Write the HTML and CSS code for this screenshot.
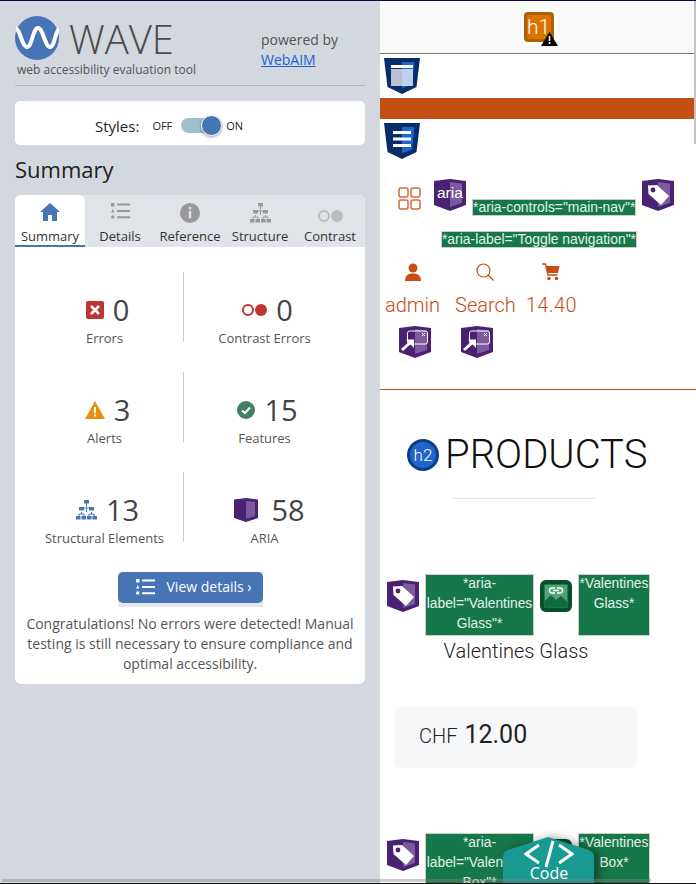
FILE: index.html
```html
<!DOCTYPE html>
<html lang="en">
<head>
  <meta charset="UTF-8">
  <meta name="viewport" content="width=device-width, initial-scale=1.0">
  <title>WAVE Summary</title>
  <link rel="stylesheet" href="styles.css">
</head>
<body>

<svg class="defs" width="0" height="0">
  <symbol id="ariaShield" viewBox="0 0 32 32">
    <path d="M0 2 16 0 32 2V26L16 32 0 26Z" fill="#4a2173"/>
    <path d="M16 3 28 4.500V24L16 28Z" fill="#7b5a9e"/>
  </symbol>
  <symbol id="tree" viewBox="0 0 21 20">
    <path d="M10.500 3V7M5.500 10V8H15.500V10M3 14V16M8 14V16M13 14V16M18 14V16M3 14H8M13 14H18M5.500 12V14M15.500 12V14M10.500 8V12" fill="none" stroke="currentColor"/>
    <path d="M8 0h5v3.500H8ZM3 7h5v3.500H3ZM13 7h5v3.500h-5ZM0 16h4.500v3.500H0ZM5.500 16h4.500v3.500H5.500ZM11 16h4.500v3.500H11ZM16.500 16h4.500v3.500h-4.500Z" fill="currentColor"/>
  </symbol>
  <symbol id="listIcon" viewBox="0 0 19 16">
    <path d="M0 0h3.500v3.500H0ZM1.750 6 3.500 9.500H0Z" fill="currentColor"/>
    <circle cx="1.750" cy="14" r="1.750" fill="currentColor"/>
    <path d="M6 1.500h13M6 8h13M6 14.200h13" stroke="currentColor" stroke-width="2"/>
  </symbol>
  <symbol id="tagShield" viewBox="0 0 32 32">
    <use href="#ariaShield"/>
    <path d="M6 6.500 15 6 27 17 19 26 6.500 15Z" fill="#fff"/>
    <circle cx="11" cy="11" r="2.400" fill="#4a2173"/>
  </symbol>
  <symbol id="dialogShield" viewBox="0 0 32 32">
    <use href="#ariaShield"/>
    <rect x="8.500" y="5" width="20" height="13" rx="2" fill="none" stroke="#fff" stroke-width="1"/>
    <path d="M23 7l3 3M26 7l-3 3" stroke="#fff"/>
    <path d="M3 24 13 15" stroke="#fff" stroke-width="3"/>
    <path d="M7 13.500h8v8.500Z" fill="#fff"/>
  </symbol>
  <symbol id="htmlShield" viewBox="0 0 36 36">
    <path d="M0 0H36L32.500 29 18 36 3.500 29Z" fill="#0a2d6a"/>
    <path d="M18 4H30.500L28 27 18 30Z" fill="#1f66c8"/>
  </symbol>
</svg>

<aside class="sidebar">
  <header class="brand">
    <div class="brand-main">
      <div class="brand-logo">
        <svg width="44" height="44" viewBox="0 0 44 44">
          <circle cx="22" cy="22" r="22" fill="#4774b5"/>
          <path d="M1 13C5 13 7 31 12 31S18 12 23 12 30 31 35 31 40 15 44 13" fill="none" stroke="#fff" stroke-width="4"/>
        </svg>
        <span class="brand-name">WAVE</span>
      </div>
      <div class="brand-tag">web accessibility evaluation tool</div>
    </div>
    <div class="powered">powered by<br><a href="#">WebAIM</a></div>
  </header>

  <div class="styles-card">
    <span class="styles-label">Styles:</span>
    <span class="styles-state">OFF</span>
    <span class="toggle"><span class="toggle-knob"></span></span>
    <span class="styles-state">ON</span>
  </div>

  <h2 class="summary-title">Summary</h2>

  <div class="panel">
    <nav class="tabs">
      <div class="tab active">
        <span class="tab-icon"><svg width="20" height="18" viewBox="0 0 20 18"><path d="M10 0 20 9H17V18H12V12H8V18H3V9H0Z" fill="#4774b5"/></svg></span>
        <span>Summary</span>
      </div>
      <div class="tab">
        <span class="tab-icon"><svg class="icon-gray" width="19" height="16"><use href="#listIcon"/></svg></span>
        <span>Details</span>
      </div>
      <div class="tab">
        <span class="tab-icon"><svg width="20" height="20" viewBox="0 0 20 20"><circle cx="10" cy="10" r="10" fill="#999"/><path d="M8.800 4h2.400v2.400H8.800ZM8.800 8h2.400v7.500H8.800Z" fill="#e0e3e8"/></svg></span>
        <span>Reference</span>
      </div>
      <div class="tab">
        <span class="tab-icon"><svg class="icon-gray" width="21" height="20"><use href="#tree"/></svg></span>
        <span>Structure</span>
      </div>
      <div class="tab">
        <span class="tab-icon tab-icon-low"><svg width="25" height="12" viewBox="0 0 25 12"><circle cx="6" cy="6" r="5" fill="none" stroke="#bbb" stroke-width="2"/><circle cx="19" cy="6" r="6" fill="#bbb"/></svg></span>
        <span>Contrast</span>
      </div>
    </nav>

    <div class="stats">
      <div class="stat">
        <div class="stat-value">
          <svg width="18" height="18" viewBox="0 0 18 18"><rect width="18" height="18" rx="2" fill="#bd3535"/><path d="M5 5l8 8M13 5l-8 8" stroke="#fff" stroke-width="2.500"/></svg>
          <span>0</span>
        </div>
        <div class="stat-label">Errors</div>
      </div>
      <div class="stat stat-right">
        <div class="stat-value">
          <svg width="25" height="12" viewBox="0 0 25 12"><circle cx="6" cy="6" r="5" fill="none" stroke="#bd3535" stroke-width="2"/><circle cx="19" cy="6" r="6" fill="#bd3535"/></svg>
          <span>0</span>
        </div>
        <div class="stat-label">Contrast Errors</div>
      </div>
      <div class="stat">
        <div class="stat-value">
          <svg width="20" height="18" viewBox="0 0 20 18"><path d="M10 0 20 18H0Z" fill="#e8910f"/><path d="M9 6h2v6H9ZM9 13.500h2v2H9Z" fill="#fff"/></svg>
          <span>3</span>
        </div>
        <div class="stat-label">Alerts</div>
      </div>
      <div class="stat stat-right">
        <div class="stat-value">
          <svg width="18" height="18" viewBox="0 0 18 18"><circle cx="9" cy="9" r="9" fill="#408164"/><path d="M5 9.500 8 12 13 6.500" fill="none" stroke="#fff" stroke-width="2"/></svg>
          <span>15</span>
        </div>
        <div class="stat-label">Features</div>
      </div>
      <div class="stat">
        <div class="stat-value">
          <svg class="icon-blue" width="21" height="20"><use href="#tree"/></svg>
          <span>13</span>
        </div>
        <div class="stat-label">Structural Elements</div>
      </div>
      <div class="stat stat-right">
        <div class="stat-value stat-value-wide">
          <svg width="24" height="24" viewBox="0 0 24 24"><path d="M0 1.500 12 0 24 1.500V20L12 24 0 20Z" fill="#4a2173"/><path d="M12 3 21 4V18L12 21Z" fill="#7b5a9e"/></svg>
          <span>58</span>
        </div>
        <div class="stat-label">ARIA</div>
      </div>
    </div>

    <div class="details-wrap">
      <a class="details-btn" href="#">
        <svg class="icon-white" width="19" height="16"><use href="#listIcon"/></svg>
        <span>View details ›</span>
      </a>
    </div>
    <p class="congrats">Congratulations! No errors were detected! Manual testing is still necessary to ensure compliance and optimal accessibility.</p>
  </div>
</aside>

<main class="page">
  <div class="topbar">
    <span class="h1-icon">
      <span class="h1-box">h1</span>
      <svg class="h1-warn" width="17" height="14" viewBox="0 0 17 14"><path d="M8.500 0 17 14H0Z" fill="#000"/><path d="M7.700 4h1.600v5H7.700ZM7.700 10h1.600v2H7.700Z" fill="#fff"/></svg>
    </span>
  </div>

  <div class="shield-row">
    <svg width="36" height="36" viewBox="0 0 36 36">
      <use href="#htmlShield"/>
      <path d="M7 11H29V28H7Z" fill="#fff" opacity=".7"/>
      <path d="M7 7H29V10H7Z" fill="#fff"/>
    </svg>
  </div>
  <div class="nav-bar"></div>
  <div class="shield-row">
    <svg width="36" height="36" viewBox="0 0 36 36">
      <use href="#htmlShield"/>
      <path d="M9 9.500H27M9 16H27M9 22.500H27" stroke="#fff" stroke-width="3"/>
    </svg>
  </div>

  <div class="tool-row">
    <svg class="grid-icon" width="23" height="23" viewBox="0 0 23 23" fill="none" stroke="#d2693a" stroke-width="1.500">
      <rect x="1" y="1" width="9" height="9" rx="2"/><rect x="13" y="1" width="9" height="9" rx="2"/>
      <rect x="1" y="13" width="9" height="9" rx="2"/><rect x="13" y="13" width="9" height="9" rx="2"/>
    </svg>
    <span class="aria-icon">
      <svg width="32" height="32"><use href="#ariaShield"/></svg>
      <span class="aria-text">aria</span>
    </span>
    <span class="attr attr-push">*aria-controls="main-nav"*</span>
    <svg width="32" height="32"><use href="#tagShield"/></svg>
  </div>
  <div class="attr-row"><span class="attr">*aria-label="Toggle navigation"*</span></div>

  <div class="links">
    <div class="link">
      <svg width="18" height="18" viewBox="0 0 18 18"><circle cx="9" cy="5" r="4.500" fill="#c44e14"/><path d="M1 18C1 12 5 10.500 9 10.500S17 12 17 18Z" fill="#c44e14"/></svg>
      <span>admin</span>
    </div>
    <div class="link">
      <svg width="18" height="18" viewBox="0 0 18 18" fill="none" stroke="#c44e14" stroke-width="1.200"><circle cx="7.500" cy="7.500" r="6.500"/><path d="M12 12l5.500 5.500"/></svg>
      <span>Search</span>
    </div>
    <div class="link link-cart">
      <svg width="18" height="18" viewBox="0 0 18 18"><path d="M0 1H3.500L6 12H15.500" fill="none" stroke="#c44e14" stroke-width="1.500"/><path d="M4 3H17.500L16 10H5.500Z" fill="#c44e14"/><circle cx="7" cy="15.500" r="1.800" fill="#c44e14"/><circle cx="14.500" cy="15.500" r="1.800" fill="#c44e14"/></svg>
      <span>14.40</span>
    </div>
  </div>
  <div class="dialog-row">
    <svg width="32" height="32"><use href="#dialogShield"/></svg>
    <svg width="32" height="32"><use href="#dialogShield"/></svg>
  </div>
  <div class="page-rule"></div>

  <div class="products-head">
    <span class="h2-icon">h2</span>
    <h2>PRODUCTS</h2>
  </div>
  <div class="products-rule"></div>

  <div class="product-row">
    <svg class="row-icon" width="32" height="32"><use href="#tagShield"/></svg>
    <span class="attr attr-box attr-wide">*aria-label="Valentines Glass"*</span>
    <svg class="row-icon" width="32" height="32" viewBox="0 0 32 32">
      <rect width="32" height="32" rx="6" fill="#064f2b"/>
      <rect x="4.500" y="4.500" width="23" height="23" fill="#4fa37a"/>
      <path d="M4.500 27.500V21L11 15 16 20 21 16 27.500 22V27.500Z" fill="#0f6a3f"/>
      <path d="M15 8H12A2.500 2.500 0 0 0 12 13H15M17 8H20A2.500 2.500 0 0 1 20 13H17M13 10.500H19" fill="none" stroke="#fff" stroke-width="1.500"/>
    </svg>
    <span class="attr attr-box attr-narrow">*Valentines Glass*</span>
  </div>
  <div class="product-name">Valentines Glass</div>
  <div class="price-card"><span class="price-cur">CHF</span><span class="price-num">12.00</span></div>

  <div class="product-row product-row-next">
    <svg class="row-icon" width="32" height="32"><use href="#tagShield"/></svg>
    <span class="attr attr-box attr-wide">*aria-label="Valentines Box"*</span>
    <svg class="row-icon" width="32" height="32" viewBox="0 0 32 32"><rect width="32" height="32" rx="6" fill="#064f2b"/></svg>
    <span class="attr attr-box attr-narrow">*Valentines Box*</span>
  </div>
</main>

<a class="code-btn" href="#">
  <svg class="code-bg" width="91" height="47" viewBox="0 0 91 47"><path d="M0 47V20Q0 15 5 13L45 0 86 13Q91 15 91 20V47Z" fill="#189a93"/></svg>
  <svg class="code-glyph" width="50" height="28" viewBox="0 0 50 28" fill="none" stroke="#fff" stroke-width="3"><path d="M15 5 2 14 15 23M35 5 48 14 35 23M29 1 22 27"/></svg>
  <span class="code-label">Code</span>
</a>
<div class="scroll-h"></div>
<div class="scroll-v"></div>

</body>
</html>
```

FILE: styles.css
```css
/* Page frame */
html, body {
  margin: 0;
  height: 884px;
  overflow: hidden;
}
body {
  display: flex;
  position: relative;
  border-top: 1px solid #0a0a3c;
  border-bottom: 1px solid #111;
  box-sizing: border-box;
  font-family: "Open Sans", sans-serif;
  background-color: #fff;
}
.defs {
  position: absolute;
}

/* WAVE sidebar */
.sidebar {
  width: 380px;
  flex: none;
  box-sizing: border-box;
  padding: 15px 15px 0;
  background-color: #d3d7de;
}
.brand {
  display: flex;
  justify-content: space-between;
  height: 69px;
  border-bottom: 1px solid #b1b4ba;
}
.brand-logo {
  display: flex;
  align-items: center;
  gap: 10px;
}
.brand-name {
  padding-top: 2px;
  font-size: 40px;
  font-weight: 300;
  color: #4a4a4a;
  line-height: 42px;
}
.brand-tag {
  font-size: 12px;
  line-height: 16px;
  color: #555;
  margin-left: 2px;
  margin-top: 2px;
}
.powered {
  width: 104px;
  font-size: 14px;
  line-height: 20px;
  color: #555;
  padding-top: 14px;
}
.powered a {
  color: #1a63d8;
}
.styles-card {
  display: flex;
  align-items: center;
  height: 44px;
  box-sizing: border-box;
  margin-top: 15px;
  padding: 5px 0 0 80px;
  background-color: #fff;
  border-radius: 5px;
  color: #222;
}
.styles-label {
  font-size: 15px;
  margin-right: 13px;
}
.styles-state {
  font-size: 11px;
}
.toggle {
  position: relative;
  width: 41px;
  height: 15px;
  margin: 0 4px 0 9px;
  background-color: #9dc0cb;
  border-radius: 8px;
}
.toggle-knob {
  position: absolute;
  top: -3px;
  right: 0;
  width: 19px;
  height: 19px;
  background-color: #4774b5;
  border: 1px solid #fff;
  border-radius: 50%;
  box-shadow: 0 1px 3px rgba(0, 0, 0, .4);
}
.summary-title {
  margin: 9px 0 11px;
  font-size: 22px;
  line-height: 30px;
  font-weight: 400;
  color: #222;
}
.panel {
  width: 350px;
  height: 489px;
  background-color: #fff;
  border-radius: 6px;
}
.tabs {
  display: flex;
  height: 52px;
  background-color: #e0e3e8;
  border-radius: 6px 6px 0 0;
}
.tab {
  width: 70px;
  height: 52px;
  box-sizing: border-box;
  display: flex;
  flex-direction: column;
  align-items: center;
  padding-top: 8px;
  font-size: 13px;
  line-height: 18px;
  color: #333;
}
.tab-icon {
  height: 24px;
}
.tab-icon-low {
  padding-top: 5px;
  height: 19px;
}
.tab.active {
  background-color: #fff;
  border-radius: 6px 6px 0 0;
  border-bottom: 2px solid #4774b5;
}
.icon-gray {
  color: #999;
}
.icon-blue {
  color: #4774b5;
}
.icon-white {
  color: #fff;
}

/* Count grid */
.stats {
  display: grid;
  grid-template-columns: 157px 162px;
  grid-auto-rows: 70px;
  row-gap: 30px;
  margin: 25px 0 30px 11px;
}
.stat {
  display: flex;
  flex-direction: column;
  align-items: center;
  padding-top: 20px;
  box-sizing: border-box;
}
.stat-right {
  border-left: 1px solid #ccc;
}
.stat-value {
  display: flex;
  align-items: center;
  gap: 9px;
  padding-left: 6px;
  font-size: 29px;
  line-height: 36px;
  color: #444;
}
.stat-value-wide {
  gap: 13px;
  padding-left: 10px;
}
.stat-label {
  font-size: 13px;
  line-height: 20px;
  color: #555;
}
.details-wrap {
  width: 145px;
  height: 35px;
  margin: 0 auto;
  background-color: #e8e9ee;
}
.details-btn {
  display: flex;
  align-items: center;
  gap: 12px;
  height: 31px;
  box-sizing: border-box;
  padding: 0 0 2px 18px;
  background-color: #4774b5;
  border-radius: 5px;
  color: #fff;
  font-size: 14px;
  text-decoration: none;
}
.congrats {
  margin: 7px 0 0;
  padding: 0 10px;
  font-size: 14px;
  line-height: 20px;
  color: #555;
  text-align: center;
}

/* Page under evaluation */
.page {
  flex: 1;
  min-width: 0;
  font-family: Roboto, sans-serif;
  font-weight: 300;
  color: #222;
}
.topbar {
  display: flex;
  justify-content: center;
  height: 52px;
  background-color: #f9f9f9;
  border-bottom: 1px solid #777;
  padding-left: 1px;
}
.h1-icon {
  position: relative;
  width: 32px;
  height: 32px;
  margin-top: 10px;
}
.h1-box {
  display: block;
  width: 24px;
  height: 24px;
  border: 4px solid #b06000;
  border-radius: 5px;
  background-color: #d97400;
  outline: 3px solid #fff;
  outline-offset: -1px;
  color: #fff;
  font-size: 21px;
  line-height: 24px;
  text-align: center;
}
.h1-warn {
  position: absolute;
  left: 18px;
  top: 21px;
}
.shield-row {
  display: flex;
  padding: 4px;
}
.nav-bar {
  height: 21px;
  background-color: #c44e14;
}
.tool-row {
  display: flex;
  align-items: flex-start;
  margin-top: 16px;
  padding-left: 18px;
}
.grid-icon {
  margin: 8px 13px 0 0;
}
.aria-icon {
  position: relative;
  width: 32px;
  height: 32px;
}
.aria-text {
  position: absolute;
  left: 3px;
  top: 5px;
  color: #fff;
  font-family: "Liberation Sans", sans-serif;
  font-size: 15.500px;
  font-weight: 400;
}
.attr {
  background-color: #16784a;
  border: 1px solid #ccc;
  color: #e4f1ea;
  font-family: "Liberation Sans", sans-serif;
  font-size: 13.900px;
  font-weight: 400;
  line-height: 15px;
}
.attr-push {
  margin: 20px 6px 0;
}
.attr-row {
  display: flex;
  justify-content: flex-end;
  margin-top: 15px;
  padding-right: 59px;
}
.links {
  display: flex;
  gap: 15px;
  margin-top: 15px;
  padding-left: 5px;
  color: #c44e14;
  font-size: 20px;
  line-height: 24px;
}
.link {
  display: flex;
  flex-direction: column;
  align-items: center;
  gap: 12px;
}
.link-cart {
  margin-left: -5px;
  letter-spacing: .4px;
}
.dialog-row {
  display: flex;
  gap: 30px;
  margin-top: 9px;
  padding-left: 19px;
}
.page-rule {
  height: 1px;
  margin-top: 31px;
  background-color: #b8551f;
}
.products-head {
  display: flex;
  align-items: center;
  gap: 6px;
  margin-top: 41px;
  padding-left: 27px;
}
.h2-icon {
  width: 26px;
  height: 26px;
  border: 3px solid #0a3d8a;
  border-radius: 50%;
  background-color: #1f66c8;
  color: #fff;
  font-size: 17px;
  line-height: 26px;
  text-align: center;
}
.products-head h2 {
  margin: 0;
  font-size: 40px;
  line-height: 48px;
  font-weight: 300;
  color: #111;
}
.products-rule {
  width: 144px;
  height: 1px;
  margin: 19px 0 0 72px;
  background-color: #e2e2e2;
}
.product-row {
  display: flex;
  align-items: flex-start;
  gap: 6px;
  margin-top: 75px;
  padding-left: 7px;
  height: 62px;
}
.row-icon {
  margin-top: 6px;
  flex: none;
}
.attr-box {
  box-sizing: border-box;
  height: 62px;
  border: 0;
  box-shadow: inset 0 0 0 1px #ccc;
  font-size: 13.800px;
  line-height: 20px;
  text-align: center;
  overflow: hidden;
}
.attr-wide {
  width: 109px;
}
.attr-narrow {
  width: 72px;
}
.product-name {
  width: 272px;
  margin-top: 3px;
  font-size: 20px;
  line-height: 24px;
  text-align: center;
}
.price-card {
  display: flex;
  align-items: center;
  gap: 7px;
  width: 243px;
  height: 62px;
  box-sizing: border-box;
  margin: 43px 0 0 14px;
  padding: 0 0 6px 25px;
  background-color: #f7f8fa;
  border-radius: 6px;
}
.price-cur {
  font-size: 20px;
  font-weight: 300;
  padding-top: 3px;
}
.price-num {
  font-size: 25px;
  font-weight: 400;
}
.product-row-next {
  margin-top: 65px;
}

/* Floating code button and scrollbars */
.code-btn {
  position: absolute;
  left: 503px;
  top: 836px;
  width: 91px;
  height: 47px;
  color: #fff;
  text-decoration: none;
  text-align: center;
}
.code-bg {
  position: absolute;
  left: 0;
  top: 0;
  filter: drop-shadow(5px 0 5px rgba(0, 0, 0, .4));
}
.code-glyph {
  position: absolute;
  left: 21px;
  top: 3px;
}
.code-label {
  position: absolute;
  left: 1px;
  right: 0;
  top: 25px;
  font-size: 16px;
  line-height: 22px;
}
.scroll-h {
  position: absolute;
  left: 2px;
  width: 649px;
  top: 878px;
  height: 3px;
  background-color: rgba(130, 130, 130, .4);
}
.scroll-v {
  position: absolute;
  right: 0;
  top: 0;
  width: 2px;
  height: 143px;
  background-color: #c4c4c4;
}
```
